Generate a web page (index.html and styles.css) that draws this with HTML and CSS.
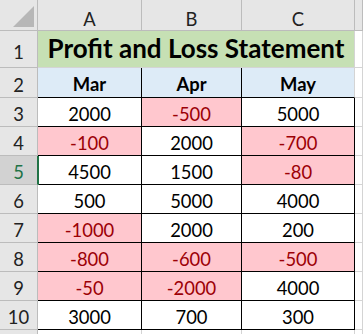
FILE: index.html
```html
<!DOCTYPE html>
<html>
<head>
<meta charset="utf-8">
<link rel="stylesheet" href="styles.css">
</head>
<body>
<div class="sheet">
  <div class="hd corner"><svg class="tri" width="21" height="21" viewBox="0 0 21 21"><polygon points="21,0 21,21 0,21" fill="#b7b7b7"/></svg></div>
  <div class="hd col">A</div>
  <div class="hd col">B</div>
  <div class="hd col">C</div>
  <div class="hd col"></div>

  <div class="hd row r1">1</div>
  <div class="c title">Profit and Loss Statement</div>
  <div class="c"></div>

  <div class="hd row">2</div>
  <div class="c mon blk">Mar</div>
  <div class="c mon blk">Apr</div>
  <div class="c mon">May</div>
  <div class="c"></div>

  <div class="hd row">3</div>
  <div class="c d">2000</div>
  <div class="c d neg">-500</div>
  <div class="c d">5000</div>
  <div class="c"></div>

  <div class="hd row">4</div>
  <div class="c d neg">-100</div>
  <div class="c d">2000</div>
  <div class="c d neg">-700</div>
  <div class="c"></div>

  <div class="hd row sel">5</div>
  <div class="c d">4500</div>
  <div class="c d">1500</div>
  <div class="c d neg">-80</div>
  <div class="c"></div>

  <div class="hd row">6</div>
  <div class="c d">500</div>
  <div class="c d">5000</div>
  <div class="c d">4000</div>
  <div class="c"></div>

  <div class="hd row">7</div>
  <div class="c d neg">-1000</div>
  <div class="c d">2000</div>
  <div class="c d">200</div>
  <div class="c"></div>

  <div class="hd row">8</div>
  <div class="c d neg">-800</div>
  <div class="c d neg">-600</div>
  <div class="c d neg">-500</div>
  <div class="c"></div>

  <div class="hd row">9</div>
  <div class="c d neg">-50</div>
  <div class="c d neg">-2000</div>
  <div class="c d">4000</div>
  <div class="c"></div>

  <div class="hd row">10</div>
  <div class="c d">3000</div>
  <div class="c d">700</div>
  <div class="c d">300</div>
  <div class="c"></div>

  <div class="hd row"></div>
  <div class="c"></div>
  <div class="c"></div>
  <div class="c"></div>
  <div class="c"></div>
</div>
</body>
</html>
```

FILE: styles.css
```css
html, body {
  margin: 0;
  padding: 0;
  background: #ffffff;
}

.sheet {
  display: grid;
  grid-template-columns: 38px 104px 100px 113px 8px;
  grid-template-rows: 31px 37px 30px repeat(8, 29px) 10px;
  width: 363px;
  height: 334px;
  overflow: hidden;
  font-family: Lato, "Open Sans", sans-serif;
  font-size: 18.4px;
  line-height: 1;
  color: #000;
}

.sheet > div {
  box-sizing: border-box;
  display: flex;
  align-items: flex-end;
  justify-content: center;
  white-space: nowrap;
  overflow: hidden;
}

.hd {
  background: #e6e6e6;
  color: #222;
  border-right: 1px solid #bcbcbc;
  border-bottom: 1px solid #bcbcbc;
  padding-bottom: 3px;
}

.col {
  padding-bottom: 2px;
}

.corner {
  position: relative;
}

.tri {
  position: absolute;
  right: 3px;
  bottom: 3px;
}

.r1 {
  padding-bottom: 6px;
}

.sel {
  background: #d2d2d2;
  color: #217346;
  border-right: 1px solid #217346;
  box-shadow: 1px 0 0 #217346;
  position: relative;
  z-index: 1;
}

.c {
  background: #ffffff;
  border-right: 1px solid #d4d4d4;
  border-bottom: 1px solid #d4d4d4;
  padding-bottom: 3px;
}

.title {
  grid-column: 2 / span 3;
  background: #c6e0b4;
  font-weight: 700;
  font-size: 26px;
  padding-bottom: 6px;
}

.mon {
  background: #ddebf7;
  font-weight: 700;
  border-bottom: 1px solid #000;
  padding-bottom: 4px;
}

.blk {
  border-right: 1px solid #000;
}

.d {
  border-right: 1px solid #000;
  border-bottom: 1px solid #000;
}

.neg {
  background: #ffc7ce;
  color: #9c0006;
}
```
